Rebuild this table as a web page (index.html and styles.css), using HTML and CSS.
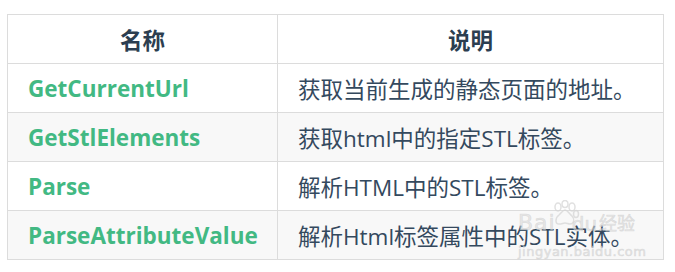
FILE: index.html
```html
<!DOCTYPE html>
<html lang="zh-CN">
<head>
<meta charset="utf-8">
<link rel="stylesheet" href="styles.css">
</head>
<body>
<div class="wrap">
<table class="api">
  <colgroup><col class="c1"><col class="c2"></colgroup>
  <thead>
    <tr><th>名称</th><th>说明</th></tr>
  </thead>
  <tbody>
    <tr><td class="name">GetCurrentUrl</td><td>获取当前生成的静态页面的地址。</td></tr>
    <tr class="alt"><td class="name">GetStlElements</td><td>获取html中的指定STL标签。</td></tr>
    <tr><td class="name">Parse</td><td>解析HTML中的STL标签。</td></tr>
    <tr class="alt"><td class="name">ParseAttributeValue</td><td>解析Html标签属性中的STL实体。</td></tr>
  </tbody>
</table>
<div class="watermark" aria-hidden="true">
  <div class="wm-top"><span class="wm-bai">Bai</span><svg class="wm-paw" width="30" height="28" viewBox="0 0 30 28"><g fill="none" stroke="#d4d4d4" stroke-width="1.5"><ellipse cx="8" cy="7" rx="3" ry="4"/><ellipse cx="15" cy="4" rx="3" ry="3.5"/><ellipse cx="22" cy="7" rx="3" ry="4"/><ellipse cx="26" cy="14" rx="2.5" ry="3.5"/><path d="M9 24c-4 0-4-6 0-9 3-3 4-5 6-5s4 3 7 6c3 3 2 8-2 8-2 0-3-1-5-1s-3 1-6 1z"/></g></svg><span class="wm-du">du</span><span class="wm-jy">经验</span></div>
  <div class="wm-url">jingyan.baidu.com</div>
</div>
</div>
</body>
</html>
```
FILE: styles.css
```css
html, body { margin: 0; padding: 0; background: #fff; }
body { padding: 14px 0 0 7px; }
.wrap { position: relative; width: 656px; }
.api {
  border-collapse: collapse;
  table-layout: fixed;
  width: 656px;
  font-family: "Open Sans", "Noto Sans CJK SC", sans-serif;
  font-size: 22.5px;
  color: #34495e;
}
.api .c1 { width: 270px; }
.api .c2 { width: 386px; }
.api th, .api td {
  border: 1px solid #dcdcdc;
  height: 49px;
  padding: 0 20px;
  box-sizing: border-box;
  white-space: nowrap;
}
.api th { font-weight: 700; text-align: center; color: #2c3e50; }
.api td { text-align: left; }
.api td.name { color: #42b983; font-weight: 700; }
.api tr.alt { background: #f8f8f8; }

.watermark {
  position: absolute;
  left: 511px;
  top: 184px;
  width: 125px;
  font-family: "DejaVu Sans", "Noto Sans CJK SC", sans-serif;
  color: rgba(215, 215, 215, 0.55);
  pointer-events: none;
  -webkit-text-stroke: 0.6px rgba(205, 205, 205, 0.6);
}
.wm-top { display: flex; align-items: flex-end; height: 36px; }
.wm-bai { font-size: 22px; line-height: 22px; letter-spacing: 1px; }
.wm-paw { margin: 0 -8px 6px -6px; opacity: 0.7; }
.wm-du { font-size: 20px; line-height: 20px; margin-right: 2px; }
.wm-jy { font-size: 18px; line-height: 20px; }
.wm-url { font-size: 13px; line-height: 16px; margin-top: 10px; letter-spacing: 0.5px; }
```
